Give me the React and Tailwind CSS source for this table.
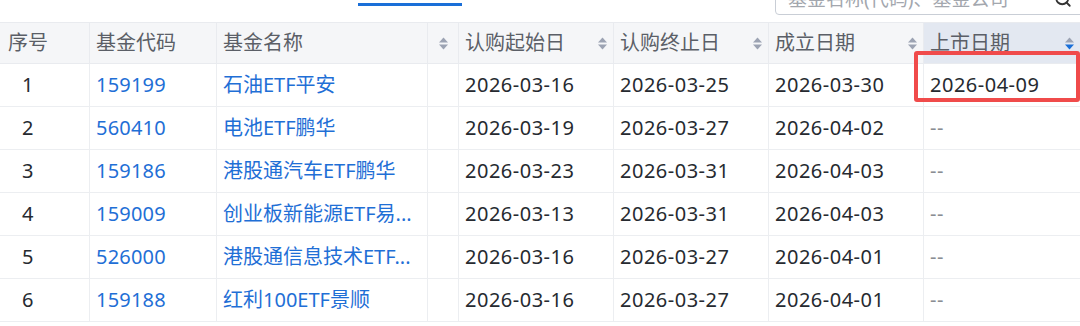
import React from 'react';
import { Search } from 'lucide-react';

// column widths in px, the 4th is the narrow sort column after 基金名称
const COLS = ['w-[90px]', 'w-[127px]', 'w-[211px]', 'w-[31px]', 'w-[155px]', 'w-[155px]', 'w-[155px]', 'w-[156px]'];

const rows = [
  { no: 1, code: '159199', name: '石油ETF平安', start: '2026-03-16', end: '2026-03-25', setup: '2026-03-30', list: '2026-04-09' },
  { no: 2, code: '560410', name: '电池ETF鹏华', start: '2026-03-19', end: '2026-03-27', setup: '2026-04-02', list: '--' },
  { no: 3, code: '159186', name: '港股通汽车ETF鹏华', start: '2026-03-23', end: '2026-03-31', setup: '2026-04-03', list: '--' },
  { no: 4, code: '159009', name: '创业板新能源ETF易...', start: '2026-03-13', end: '2026-03-31', setup: '2026-04-03', list: '--' },
  { no: 5, code: '526000', name: '港股通信息技术ETF...', start: '2026-03-16', end: '2026-03-27', setup: '2026-04-01', list: '--' },
  { no: 6, code: '159188', name: '红利100ETF景顺', start: '2026-03-16', end: '2026-03-27', setup: '2026-04-01', list: '--' },
];

const SortIcon = ({ active = false }) => (
  <svg width="11" height="15" viewBox="0 0 11 15" className="shrink-0">
    <path d="M1 6.5 L5.5 1.5 L10 6.5 Z" fill="#9ca3b3" />
    <path d="M1 8.5 L5.5 13.5 L10 8.5 Z" fill={active ? '#1a6fd8' : '#9ca3b3'} />
  </svg>
);

const HeadCell = ({ width, children, sort, active, className = '' }) => (
  <div className={`${width} h-full shrink-0 flex items-center justify-between pl-[6px] pr-[5px] border-r border-[#e9ebef] ${className}`}>
    <span>{children}</span>
    {sort && <SortIcon active={active} />}
  </div>
);

const Cell = ({ width, children, className = '' }) => (
  <div className={`${width} h-full shrink-0 flex items-center pl-[6px] border-r border-[#eceef1] whitespace-nowrap overflow-hidden ${className}`}>
    {children}
  </div>
);

export default function App() {
  return (
    <div
      className="relative w-[1080px] h-[326px] overflow-hidden bg-white text-[20px]"
      style={{ fontFamily: '"Noto Sans", "Noto Sans CJK SC", sans-serif' }}
    >
      {/* tab underline + search box, both cut off at the top */}
      <div className="flex h-[22px] overflow-hidden">
        <div className="w-[775px] shrink-0">
          <div className="ml-[358px] mt-[3px] h-[3px] w-[104px] bg-[#1a6fd8]" />
        </div>
        <div className="w-[312px] h-[32px] shrink-0 self-end mb-[7px] flex items-center justify-between pl-[12px] pr-[14px] border border-[#c9ced6] rounded-[4px] text-[19px] text-[#a3a7ae]">
          <span>基金名称(代码)、基金公司</span>
          <Search size={18} strokeWidth={2.4} className="text-[#333]" />
        </div>
      </div>

      {/* header */}
      <div className="flex h-[42px] bg-[#f5f6f8] border-t border-b border-[#e9ebef] text-[#5b5f67]">
        <HeadCell width={COLS[0]} className="pl-[8px]">序号</HeadCell>
        <HeadCell width={COLS[1]}>基金代码</HeadCell>
        <HeadCell width={COLS[2]}>基金名称</HeadCell>
        <div className={`${COLS[3]} h-full shrink-0 flex items-center justify-center border-r border-[#e9ebef]`}>
          <SortIcon />
        </div>
        <HeadCell width={COLS[4]} sort>认购起始日</HeadCell>
        <HeadCell width={COLS[5]} sort>认购终止日</HeadCell>
        <HeadCell width={COLS[6]} sort>成立日期</HeadCell>
        <HeadCell width={COLS[7]} sort active className="bg-[#e3e8f1] border-r-0">上市日期</HeadCell>
      </div>

      {/* body */}
      {rows.map((r) => (
        <div key={r.no} className="flex h-[43px] border-b border-[#eceef1] text-[#262a30]">
          <Cell width={COLS[0]} className="pl-[22px]">{r.no}</Cell>
          <Cell width={COLS[1]} className="text-[#1f6fd6] tracking-[0.2px]">{r.code}</Cell>
          <Cell width={COLS[2]} className="text-[#1f6fd6]">{r.name}</Cell>
          <Cell width={COLS[3]} />
          <Cell width={COLS[4]} className="tracking-[0.5px]">{r.start}</Cell>
          <Cell width={COLS[5]} className="tracking-[0.5px]">{r.end}</Cell>
          <Cell width={COLS[6]} className="tracking-[0.5px]">{r.setup}</Cell>
          <Cell width={COLS[7]} className={`border-r-0 tracking-[0.5px] ${r.list === '--' ? 'text-[#8a8d93]' : ''}`}>{r.list}</Cell>
        </div>
      ))}

      {/* red highlight annotation */}
      <div className="absolute left-[914px] top-[51px] w-[166px] h-[51px] border-[4px] border-[#f04b4b] rounded-[3px]" />
    </div>
  );
}
